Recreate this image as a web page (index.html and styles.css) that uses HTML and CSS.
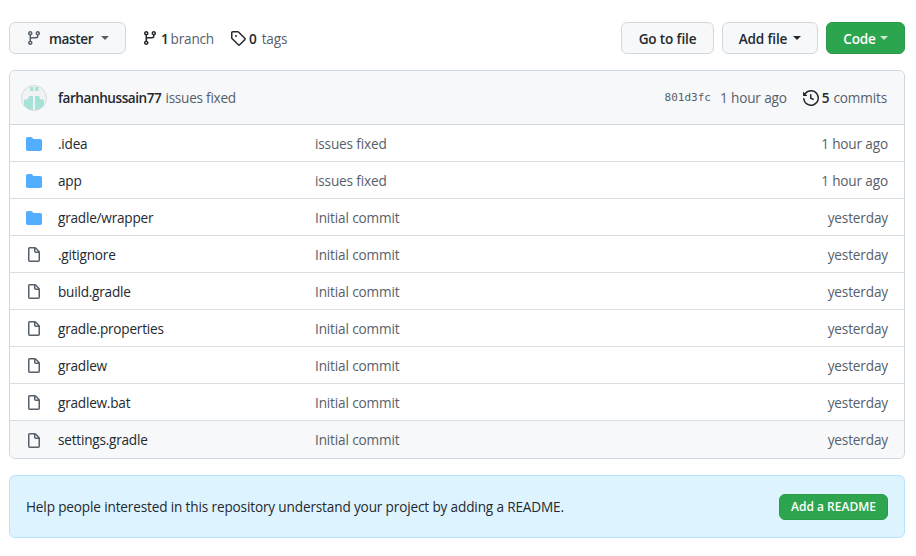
FILE: index.html
```html
<!DOCTYPE html>
<html lang="en">
<head>
  <meta charset="utf-8">
  <title>farhanhussain77 repository</title>
  <link rel="stylesheet" href="styles.css">
</head>
<body>
  <svg class="defs" width="0" height="0">
    <symbol id="i-branch" viewBox="0 0 16 16"><path fill-rule="evenodd" d="M11.75 2.5a.75.75 0 100 1.5.75.75 0 000-1.5zm-2.25.75a2.25 2.25 0 113 2.122V6A2.5 2.5 0 0110 8.5H6a1 1 0 00-1 1v1.128a2.251 2.251 0 11-1.5 0V5.372a2.25 2.25 0 111.5 0v1.836A2.492 2.492 0 016 7h4a1 1 0 001-1v-.628A2.25 2.25 0 019.5 3.25zM4.25 12a.75.75 0 100 1.5.75.75 0 000-1.5zM3.5 3.25a.75.75 0 111.5 0 .75.75 0 01-1.5 0z"/></symbol>
    <symbol id="i-folder" viewBox="0 0 16 16"><path d="M1.75 1A1.75 1.75 0 000 2.75v10.5C0 14.216.784 15 1.75 15h12.5A1.75 1.75 0 0016 13.25v-8.5A1.75 1.75 0 0014.25 3H7.5a.25.25 0 01-.2-.1l-.9-1.2C6.07 1.26 5.55 1 5 1H1.75z"/></symbol>
    <symbol id="i-file" viewBox="0 0 16 16"><path fill-rule="evenodd" d="M3.75 1.5a.25.25 0 00-.25.25v11.5c0 .138.112.25.25.25h8.5a.25.25 0 00.25-.25V6H9.75A1.75 1.75 0 018 4.25V1.5H3.75zm5.75.56v2.19c0 .138.112.25.25.25h2.19L9.5 2.06zM2 1.75C2 .784 2.784 0 3.75 0h5.086c.464 0 .909.184 1.237.513l3.414 3.414c.329.328.513.773.513 1.237v8.086A1.75 1.75 0 0112.25 15h-8.5A1.75 1.75 0 012 13.25V1.75z"/></symbol>
  </svg>

  <div class="toolbar">
    <a class="btn branch-btn">
      <svg class="icon muted"><use href="#i-branch"/></svg>
      <span class="branch-name">master</span>
      <span class="caret muted-caret"></span>
    </a>
    <a class="meta-link branch-link"><svg class="icon dark"><use href="#i-branch"/></svg><b>1</b> branch</a>
    <a class="meta-link tag-link">
      <svg class="icon dark" viewBox="0 0 16 16"><path fill-rule="evenodd" d="M2.5 7.775V2.75a.25.25 0 01.25-.25h5.025a.25.25 0 01.177.073l6.25 6.25a.25.25 0 010 .354l-5.025 5.025a.25.25 0 01-.354 0l-6.25-6.25a.25.25 0 01-.073-.177zm-1.5 0V2.75C1 1.784 1.784 1 2.75 1h5.025c.464 0 .91.184 1.238.513l6.25 6.25a1.75 1.75 0 010 2.474l-5.026 5.026a1.75 1.75 0 01-2.474 0l-6.25-6.25A1.75 1.75 0 011 7.775zM6 5a1 1 0 100 2 1 1 0 000-2z"/></svg><b>0</b> tags
    </a>
    <div class="toolbar-right">
      <a class="btn goto-btn">Go to file</a>
      <a class="btn add-btn">Add file <span class="caret"></span></a>
      <a class="btn green code-btn">Code <span class="caret light-caret"></span></a>
    </div>
  </div>

  <div class="files">
    <div class="commit">
      <svg class="avatar" viewBox="0 0 26 26">
        <clipPath id="avatar-clip"><circle cx="13" cy="13" r="12.5"/></clipPath>
        <g clip-path="url(#avatar-clip)">
          <rect width="26" height="26" fill="#f0f3f2"/>
          <rect x="9" y="2" width="3.500" height="4" fill="#a5e3d8"/>
          <rect x="14" y="2" width="3.500" height="4" fill="#a5e3d8"/>
          <path d="M3 15l4-1 1-3h4v15H3zM23 15l-4-1-1-3h-4v15h9z" fill="#a5e3d8"/>
        </g>
        <circle cx="13" cy="13" r="12.5" fill="none" stroke="#d8dcdc"/>
      </svg>
      <span class="author">farhanhussain77</span>
      <span class="commit-msg">issues fixed</span>
      <span class="commit-right">
        <code class="sha">801d3fc</code>
        <span class="commit-age">1 hour ago</span>
        <a class="history">
          <svg class="icon dark" viewBox="0 0 16 16"><path fill-rule="evenodd" d="M1.643 3.143L.427 1.927A.25.25 0 000 2.104V5.750c0 .138.112.25.25.25h3.646a.25.25 0 00.177-.427L2.715 4.215a6.500 6.500 0 11-1.180 4.458.75.75 0 10-1.493.154 8.001 8.001 0 101.600-5.684zM7.750 4a.75.75 0 01.75.75v2.992l2.028.812a.75.75 0 01-.557 1.392l-2.500-1A.75.75 0 017 8.250v-3.500A.75.75 0 017.750 4z"/></svg><b>5</b> commits
        </a>
      </span>
    </div>
    <div class="row"><svg class="icon folder"><use href="#i-folder"/></svg><a class="name">.idea</a><a class="msg">issues fixed</a><span class="age">1 hour ago</span></div>
    <div class="row"><svg class="icon folder"><use href="#i-folder"/></svg><a class="name">app</a><a class="msg">issues fixed</a><span class="age">1 hour ago</span></div>
    <div class="row"><svg class="icon folder"><use href="#i-folder"/></svg><a class="name">gradle/wrapper</a><a class="msg">Initial commit</a><span class="age">yesterday</span></div>
    <div class="row"><svg class="icon muted"><use href="#i-file"/></svg><a class="name">.gitignore</a><a class="msg">Initial commit</a><span class="age">yesterday</span></div>
    <div class="row"><svg class="icon muted"><use href="#i-file"/></svg><a class="name">build.gradle</a><a class="msg">Initial commit</a><span class="age">yesterday</span></div>
    <div class="row"><svg class="icon muted"><use href="#i-file"/></svg><a class="name">gradle.properties</a><a class="msg">Initial commit</a><span class="age">yesterday</span></div>
    <div class="row"><svg class="icon muted"><use href="#i-file"/></svg><a class="name">gradlew</a><a class="msg">Initial commit</a><span class="age">yesterday</span></div>
    <div class="row"><svg class="icon muted"><use href="#i-file"/></svg><a class="name">gradlew.bat</a><a class="msg">Initial commit</a><span class="age">yesterday</span></div>
    <div class="row hover"><svg class="icon muted"><use href="#i-file"/></svg><a class="name">settings.gradle</a><a class="msg">Initial commit</a><span class="age">yesterday</span></div>
  </div>

  <div class="readme-banner">
    <span>Help people interested in this repository understand your project by adding a README.</span>
    <a class="btn green small">Add a README</a>
  </div>
</body>
</html>
```

FILE: styles.css
```css
/* --- basic page layout --- */
*{box-sizing:border-box}
body{font-family:"Open Sans","Noto Sans",Arial,sans-serif;font-size:13.6px;letter-spacing:-.15px;background:#fff;margin:0;padding:22px 11px 0 9px;color:#24292f}
b{font-weight:600;color:#24292f}
.defs{position:absolute}
.icon{width:16px;height:16px;fill:currentColor;flex:none}
.muted{color:#57606a}
.dark{color:#24292f}
.folder{color:#54aeff}

/* --- toolbar --- */
.toolbar{display:flex;align-items:center;height:32px;margin-bottom:16px}
.toolbar-right{margin-left:auto;display:flex;gap:8px}
.btn{display:flex;align-items:center;justify-content:center;height:32px;background:#f6f8fa;border:1px solid #d5d8da;border-radius:6px;font-weight:600;color:#24292f;white-space:nowrap}
.branch-btn{width:117px;padding-left:16px;justify-content:flex-start}
.branch-name{font-weight:600;letter-spacing:-.4px;margin-left:7px}
.caret{display:inline-block;width:0;height:0;margin-left:6px;border:4px solid transparent;border-top-color:#24292f;border-bottom:0}
.muted-caret{margin-left:8px;border-top-color:#57606a}
.light-caret{margin-left:4px;border-top-color:#cfe8d6}
.meta-link{display:flex;align-items:center;color:#57606a}
.meta-link .icon{margin-right:3px}
.meta-link b{margin-right:5px}
.branch-link{margin-left:16px;letter-spacing:-.2px}
.branch-link b{margin-right:2px}
.tag-link{margin-left:16px}
.goto-btn{width:93px}
.add-btn{width:96px}
.green{background:#2da44e;border-color:#2a9a4a;color:#fff}
.code-btn{width:79px}

/* --- file list --- */
.files{border:1px solid #d0d7de;border-radius:6px}
.commit{display:flex;align-items:center;height:54px;padding:0 17px 0 11px;background:#f6f8fa;border-bottom:1px solid #d0d7de;border-radius:6px 6px 0 0;color:#57606a}
.avatar{width:26px;height:26px;flex:none;margin-right:11px}
.author{font-weight:600;letter-spacing:-.45px;color:#24292f;margin-right:4px}
.commit-msg{letter-spacing:-.25px}
.commit-right{margin-left:auto;display:flex;align-items:center}
.sha{font-family:"DejaVu Sans Mono",monospace;font-size:11px;letter-spacing:0;margin-right:9px}
.history{display:flex;align-items:center;margin-left:16px}
.history .icon{margin-right:3px}
.history b{margin-right:4px}
.row{display:grid;grid-template-columns:16px 257px 1fr auto;align-items:center;height:37px;padding:2px 16px 0 16px;border-top:1px solid #d8dee4;color:#57606a}
.commit + .row{border-top:0;height:36px}
.name{color:#24292f;margin:0 0 2px 16px;letter-spacing:-.22px}
.msg{margin:0 0 2px 16px}
.age{margin-bottom:2px}
.hover{height:38px;background:#f6f8fa;border-radius:0 0 6px 6px}

/* --- readme banner --- */
.readme-banner{display:flex;align-items:center;justify-content:space-between;height:63px;margin-top:16px;padding:0 16px;background:#ddf4ff;border:1px solid #b6e3ff;border-radius:6px}
.small{height:26px;width:109px;font-size:12px;font-weight:600;letter-spacing:0}
```
